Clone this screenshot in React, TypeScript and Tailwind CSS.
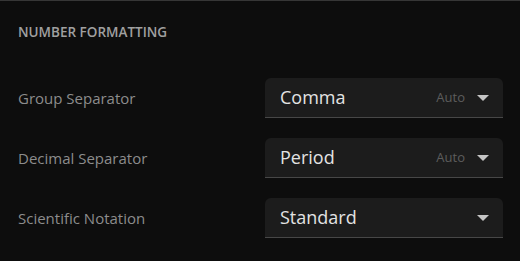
import React from "react";

const rows = [
  { label: "Group Separator", value: "Comma", hint: "Auto" },
  { label: "Decimal Separator", value: "Period", hint: "Auto" },
  { label: "Scientific Notation", value: "Standard", hint: "" },
];

const Caret = () => (
  <svg width="12" height="6" viewBox="0 0 12 6" className="shrink-0">
    <path d="M0 0 L12 0 L6 6 Z" fill="#c4c4c4" />
  </svg>
);

const App: React.FC = () => {
  return (
    <div
      className="w-[520px] h-[261px] bg-[#0d0d0d] border-t border-[#363636] pl-[18px] pr-[17px] overflow-hidden"
      style={{ fontFamily: '"Open Sans", "Noto Sans", sans-serif' }}
    >
      <h3 className="pt-[22px] text-[13.5px] leading-[18px] font-semibold text-[#a0a0a0] uppercase">
        Number Formatting
      </h3>

      <div className="mt-[37px] flex flex-col gap-5">
        {rows.map((row) => (
          <div key={row.label} className="grid grid-cols-[1fr_238px] items-center">
            <span className="text-[15px] text-[#8c8c8c]">{row.label}</span>
            <div className="h-10 flex items-center bg-[#1c1c1c] rounded-t-md border-b border-[#474747] pl-[15px] pr-[14px]">
              <span className="flex-1 text-[18px] text-[#e3e3e3]">{row.value}</span>
              {row.hint && (
                <span className="text-[13px] text-[#5c5c5c] mr-3">{row.hint}</span>
              )}
              <Caret />
            </div>
          </div>
        ))}
      </div>
    </div>
  );
};

export default App;
